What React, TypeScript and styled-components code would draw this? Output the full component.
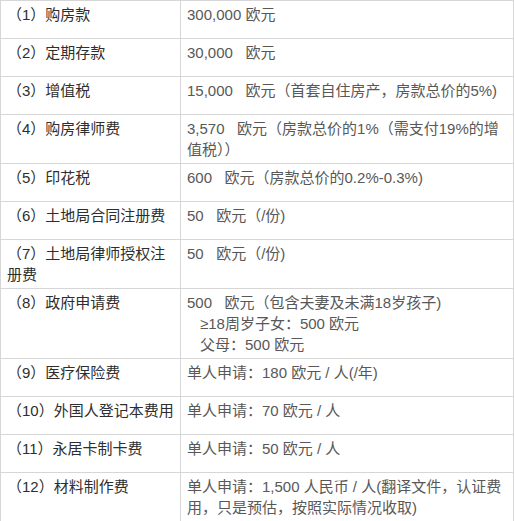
import React from "react";
import styled, { createGlobalStyle } from "styled-components";

const Global = createGlobalStyle`
  html, body { margin: 0; padding: 0; background: #ffffff; }
  body { font-family: "Liberation Sans", "Noto Sans CJK SC", sans-serif; }
`;

const Table = styled.table`
  width: 514px;
  border-collapse: collapse;
  font-size: 15px;
  line-height: 21px;
`;

const Cell = styled.td<{ $label?: boolean }>`
  border: 1px solid #d6d6d6;
  padding: 3px ${(p) => (p.$label ? "5px" : "6px")} 3px 6px;
  height: 31px;
  vertical-align: top;
  box-sizing: content-box;
  width: ${(p) => (p.$label ? "168px" : "auto")};
  color: ${(p) => (p.$label ? "#2e2e2e" : "#585858")};
`;

const Indent = styled.span`
  padding-left: 13px;
`;

const sp = "\u00a0\u00a0\u00a0";

type Row = { label: string; value: React.ReactNode };

const rows: Row[] = [
  { label: "（1）购房款", value: "300,000 欧元" },
  { label: "（2）定期存款", value: `30,000${sp}欧元` },
  { label: "（3）增值税", value: `15,000${sp}欧元（首套自住房产，房款总价的5%)` },
  { label: "（4）购房律师费", value: `3,570${sp}欧元（房款总价的1%（需支付19%的增值税））` },
  { label: "（5）印花税", value: `600${sp}欧元（房款总价的0.2%-0.3%)` },
  { label: "（6）土地局合同注册费", value: `50${sp}欧元（/份)` },
  { label: "（7）土地局律师授权注册费", value: `50${sp}欧元（/份)` },
  {
    label: "（8）政府申请费",
    value: (
      <>
        {`500${sp}欧元（包含夫妻及未满18岁孩子)`}
        <br />
        <Indent>≥18周岁子女：500 欧元</Indent>
        <br />
        <Indent>父母：500 欧元</Indent>
      </>
    ),
  },
  { label: "（9）医疗保险费", value: "单人申请：180 欧元 / 人(/年)" },
  { label: "（10）外国人登记本费用", value: "单人申请：70 欧元 / 人" },
  { label: "（11）永居卡制卡费", value: "单人申请：50 欧元 / 人" },
  { label: "（12）材料制作费", value: "单人申请：1,500 人民币 / 人(翻译文件，认证费用，只是预估，按照实际情况收取)" },
];

export default function App() {
  return (
    <>
      <Global />
      <Table>
        <tbody>
          {rows.map((r) => (
            <tr key={r.label}>
              <Cell $label>{r.label}</Cell>
              <Cell>{r.value}</Cell>
            </tr>
          ))}
        </tbody>
      </Table>
    </>
  );
}
